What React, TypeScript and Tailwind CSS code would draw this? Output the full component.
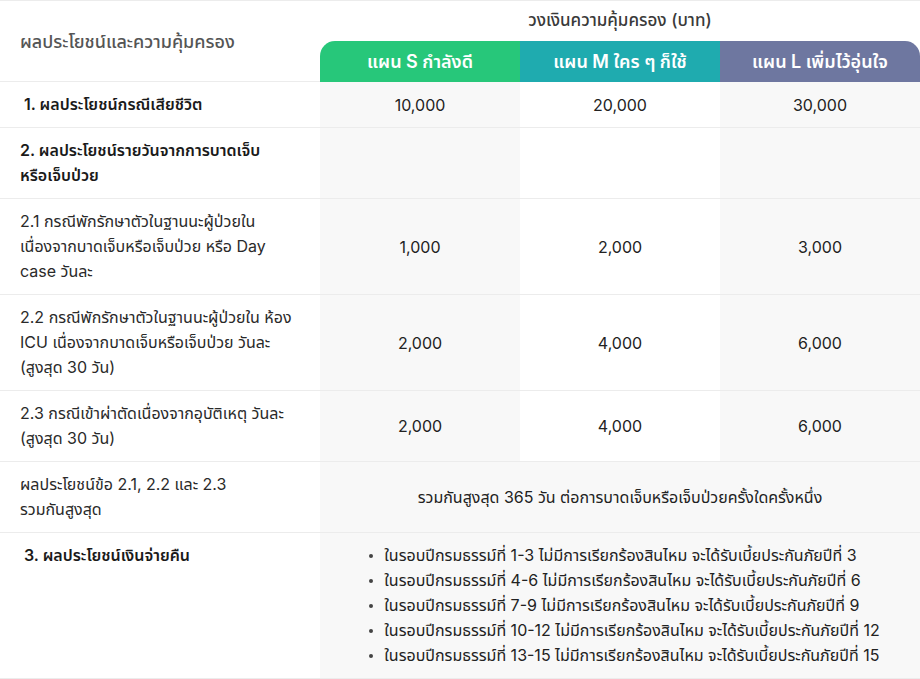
import React from "react";

const font = { fontFamily: 'Inter, "Noto Sans", "Noto Sans Thai", sans-serif' };

function Row({
  label,
  bold,
  padLeft,
  s,
  m,
  l,
}: {
  label: React.ReactNode;
  bold?: boolean;
  padLeft: string;
  s?: string;
  m?: string;
  l?: string;
}) {
  return (
    <div className="grid grid-cols-[320px_200px_200px_200px] border-b border-[#ececec]">
      <div
        className={`${padLeft} pr-2 py-[10px] text-[16px] leading-[25px] whitespace-nowrap ${
          bold ? "font-semibold text-[#1a1a1a]" : "text-[#2a2a2a]"
        }`}
      >
        {label}
      </div>
      <div className="bg-[#f8f8f8] flex items-center justify-center text-[16px] text-[#222]">{s}</div>
      <div className="bg-white flex items-center justify-center text-[16px] text-[#222]">{m}</div>
      <div className="bg-[#f8f8f8] flex items-center justify-center text-[16px] text-[#222]">{l}</div>
    </div>
  );
}

export default function App() {
  const bullets = [
    "ในรอบปีกรมธรรม์ที่ 1-3 ไม่มีการเรียกร้องสินไหม จะได้รับเบี้ยประกันภัยปีที่ 3",
    "ในรอบปีกรมธรรม์ที่ 4-6 ไม่มีการเรียกร้องสินไหม จะได้รับเบี้ยประกันภัยปีที่ 6",
    "ในรอบปีกรมธรรม์ที่ 7-9 ไม่มีการเรียกร้องสินไหม จะได้รับเบี้ยประกันภัยปีที่ 9",
    "ในรอบปีกรมธรรม์ที่ 10-12 ไม่มีการเรียกร้องสินไหม จะได้รับเบี้ยประกันภัยปีที่ 12",
    "ในรอบปีกรมธรรม์ที่ 13-15 ไม่มีการเรียกร้องสินไหม จะได้รับเบี้ยประกันภัยปีที่ 15",
  ];
  return (
    <div className="w-[920px] bg-white" style={font}>
      {/* header */}
      <div className="grid grid-cols-[320px_600px] border-t border-[#ececec]">
        <div className="flex items-center pl-5 h-[81px] border-b border-[#ececec] text-[18px] font-medium text-[#555]">
          ผลประโยชน์และความคุ้มครอง
        </div>
        <div className="flex flex-col">
          <div className="h-[40px] flex items-center justify-center text-[17px] text-[#3a3a3a] font-medium">
            วงเงินความคุ้มครอง (บาท)
          </div>
          <div className="grid grid-cols-3 h-[41px]">
            <div className="bg-[#27c77a] rounded-tl-[15px] flex items-center justify-center text-white text-[18px] font-semibold">
              แผน S กำลังดี
            </div>
            <div className="bg-[#1fabaf] flex items-center justify-center text-white text-[18px] font-semibold">
              แผน M ใคร ๆ ก็ใช้
            </div>
            <div className="bg-[#6e77a0] rounded-tr-[15px] flex items-center justify-center text-white text-[18px] font-semibold">
              แผน L เพิ่มไว้อุ่นใจ
            </div>
          </div>
        </div>
      </div>

      <Row label="1. ผลประโยชน์กรณีเสียชีวิต" bold padLeft="pl-6" s="10,000" m="20,000" l="30,000" />
      <Row
        label={
          <>
            2. ผลประโยชน์รายวันจากการบาดเจ็บ
            <br />
            หรือเจ็บป่วย
          </>
        }
        bold
        padLeft="pl-5"
      />
      <Row
        label={
          <>
            2.1 กรณีพักรักษาตัวในฐานนะผู้ป่วยใน
            <br />
            เนื่องจากบาดเจ็บหรือเจ็บป่วย หรือ Day
            <br />
            case วันละ
          </>
        }
        padLeft="pl-5"
        s="1,000"
        m="2,000"
        l="3,000"
      />
      <Row
        label={
          <>
            2.2 กรณีพักรักษาตัวในฐานนะผู้ป่วยใน ห้อง
            <br />
            ICU เนื่องจากบาดเจ็บหรือเจ็บป่วย วันละ
            <br />
            (สูงสุด 30 วัน)
          </>
        }
        padLeft="pl-5"
        s="2,000"
        m="4,000"
        l="6,000"
      />
      <Row
        label={
          <>
            2.3 กรณีเข้าผ่าตัดเนื่องจากอุบัติเหตุ วันละ
            <br />
            (สูงสุด 30 วัน)
          </>
        }
        padLeft="pl-5"
        s="2,000"
        m="4,000"
        l="6,000"
      />

      <div className="grid grid-cols-[320px_600px] border-b border-[#ececec]">
        <div className="pl-5 pr-4 py-[10px] text-[16px] leading-[25px] text-[#2a2a2a]">
          ผลประโยชน์ข้อ 2.1, 2.2 และ 2.3
          <br />
          รวมกันสูงสุด
        </div>
        <div className="bg-[#f8f8f8] flex items-center justify-center text-[16px] text-[#222]">
          รวมกันสูงสุด 365 วัน ต่อการบาดเจ็บหรือเจ็บป่วยครั้งใดครั้งหนึ่ง
        </div>
      </div>

      <div className="grid grid-cols-[320px_600px] border-b border-[#ececec]">
        <div className="pl-6 pr-4 py-[10px] text-[16px] leading-[25px] font-semibold text-[#1a1a1a]">
          3. ผลประโยชน์เงินจ่ายคืน
        </div>
        <div className="bg-[#f8f8f8] flex justify-center py-[10px]">
          <ul className="text-[16px] leading-[25px] text-[#222]">
            {bullets.map((b) => (
              <li key={b} className="flex items-center">
                <span className="w-6 shrink-0 flex items-center">
                  <span className="ml-[9px] w-[4px] h-[4px] rounded-full bg-[#444]" />
                </span>
                <span>{b}</span>
              </li>
            ))}
          </ul>
        </div>
      </div>
    </div>
  );
}
